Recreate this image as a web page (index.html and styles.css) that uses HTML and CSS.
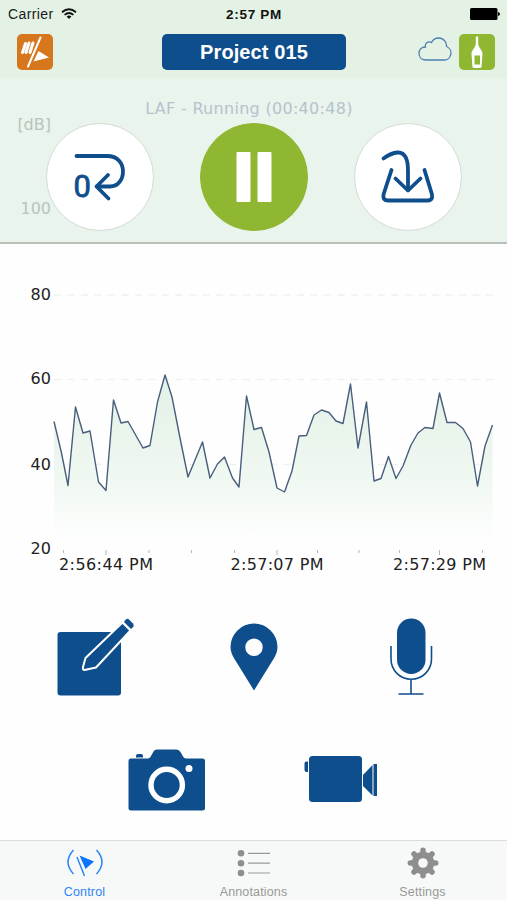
FILE: index.html
```html
<!DOCTYPE html>
<html lang="en">
<head>
    <meta charset="UTF-8">
    <meta name="viewport" content="width=device-width, initial-scale=1.0">
    <title>Project 015</title>
    <link rel="stylesheet" href="styles.css">
</head>
<body>
    <header class="top-bar">
        <div class="status-bar">
            <div class="carrier">
                <span>Carrier</span>
                <svg width="16" height="12" viewBox="0 0 16 12" fill="none" stroke="#111" stroke-width="1.8">
                    <path d="M1 4.3Q8-1.8 15 4.3"/>
                    <path d="M3.6 6.9Q8 3 12.4 6.9"/>
                    <path d="M5.6 8.5Q8 6.4 10.4 8.5L8 11Z" fill="#111" stroke="none"/>
                </svg>
            </div>
            <span class="time">2:57 PM</span>
            <svg class="battery" width="30" height="12" viewBox="0 0 30 12">
                <rect width="27.500" height="12" rx="1.500"/>
                <path d="M28 4Q30 4.500 30 6Q30 7.500 28 8Z"/>
            </svg>
        </div>
        <div class="nav-bar">
            <svg class="logo" width="36" height="36" viewBox="0 0 36 36">
                <rect width="36" height="36" rx="5" fill="#d6761d"/>
                <path d="M8.500 9.500L5.500 18.500M12 9L9 18.500M16 9L13 18.500" stroke="#fff" stroke-width="3" stroke-linecap="round"/>
                <path d="M23.500 3.500L11 32.500" stroke="#fff" stroke-width="2" stroke-linecap="round"/>
                <path d="M21.500 17L32 23.500L16.500 27.500Z" fill="#fff"/>
            </svg>
            <button class="project">Project 015</button>
            <div class="nav-right">
                <svg width="34" height="24" viewBox="0 0 34 24" fill="none" stroke="#4e7fae" stroke-width="1.300">
                    <path d="M8 23H25.500A7 7 0 0 0 28.500 9.500C29 4 24.500 1 20.500 1C17.500 1 15 2.500 13.500 5.500C10 3.500 6.500 6.500 7.500 10C3 10 1 13 1 16.500C1 20.500 4 23 8 23Z"/>
                </svg>
                <svg width="36" height="36" viewBox="0 0 36 36">
                    <rect width="36" height="36" rx="5" fill="#8fb732"/>
                    <path d="M16.800 2.500H19.200V10C19.700 14 23.500 16 23.500 20L22.500 33.500Q18 34.500 13.500 33.500L12.500 20C12.500 16 16.300 14 16.800 10Z" fill="#fff"/>
                    <path d="M15.500 21.500H21V30.500H15.500Z" fill="#8fb732"/>
                </svg>
            </div>
        </div>
    </header>

    <section class="panel">
        <div class="running">LAF - Running (00:40:48)</div>
        <span class="unit">[dB]</span>
        <span class="scale-top">100</span>
        <div class="controls">
            <button class="round">
                <svg width="106" height="106" viewBox="47 124 106 106" fill="none" stroke="#0f4e8c" stroke-width="3.800" stroke-linecap="round" stroke-linejoin="round">
                    <path d="M76.500 156H107C118 156 123 163.500 123 171.500C123 179.500 118 186.500 110 186.500H97"/>
                    <path d="M108 175L96.500 186.500L108.500 198.500"/>
                    <text class="zero" x="73.500" y="196.500">0</text>
                </svg>
            </button>
            <button class="round pause">
                <svg width="106" height="106" viewBox="201 124 106 106" fill="#fff">
                    <rect x="236.500" y="152" width="14" height="50" rx="1"/>
                    <rect x="257.500" y="152" width="14" height="50" rx="1"/>
                </svg>
            </button>
            <button class="round">
                <svg width="106" height="106" viewBox="355 124 106 106" fill="none" stroke="#0f4e8c" stroke-width="3.800" stroke-linecap="round" stroke-linejoin="round">
                    <path d="M391.500 170L383.500 194.500Q382.500 200.500 388 200.500H427.500Q433 200.500 432 194.500L424.500 170"/>
                    <path d="M383.500 158.500Q391 153 397.500 152.500C405.500 152 408 160 408 171V190"/>
                    <path d="M395.500 178.500L408 190.500L420.500 178.500"/>
                </svg>
            </button>
        </div>
    </section>

    <svg class="chart" width="507" height="336" viewBox="0 244 507 336">
        <defs>
            <linearGradient id="fade" gradientUnits="userSpaceOnUse" x1="0" y1="375" x2="0" y2="547">
                <stop offset="0" stop-color="#e3f1e6"/>
                <stop offset="0.550" stop-color="#eef7f0"/>
                <stop offset="1" stop-color="#fff"/>
            </linearGradient>
        </defs>
        <path class="grid" d="M54 295H493M54 379.500H493M54 464.500H493"/>
        <path id="area" fill="url(#fade)"/>
        <path id="line" class="line"/>
        <path class="ticks" d="M63.500 550V553M149 550V553M191.500 550V553M234.500 550V553M317.500 550V553M359 550V553M399.500 550V553M482.500 550V553M106 550V555M277 550V555M439.500 550V555"/>
        <g class="labels">
            <text x="30.500" y="300">80</text>
            <text x="30.500" y="384">60</text>
            <text x="30.500" y="470">40</text>
            <text x="30.500" y="554">20</text>
            <text x="59" y="569.500" textLength="94">2:56:44 PM</text>
            <text x="230.500" y="569.500" textLength="93">2:57:07 PM</text>
            <text x="393" y="569.500" textLength="93">2:57:29 PM</text>
        </g>
    </svg>

    <main class="actions">
        <div class="row first">
            <svg width="80" height="80" viewBox="56 617 80 80">
                <rect x="57.500" y="632" width="63.500" height="63.500" rx="3"/>
                <path d="M122.500 622.500L130.500 630.500L96 667.500L84.500 670Q82.500 670 83 667L85.500 658Z" stroke="#fff" stroke-width="2" stroke-linejoin="round"/>
                <path d="M125 620.500Q127 617.500 129.500 620L133 623.500Q134.500 625.500 132.500 627.500L131 629L124 622Z"/>
            </svg>
            <svg width="80" height="80" viewBox="214 617 80 80">
                <path fill-rule="evenodd" d="M254 690.500L234.500 659C232 655 230.500 651 230.500 647A23.500 23.500 0 0 1 277.500 647C277.500 651 276 655 273.500 659ZM254 638.500A8.700 8.700 0 1 0 254 656A8.700 8.700 0 1 0 254 638.500Z"/>
            </svg>
            <svg width="80" height="80" viewBox="371 617 80 80">
                <rect x="397" y="618.500" width="28.500" height="55.500" rx="14.200"/>
                <path d="M391 646V659A20.200 20.200 0 0 0 431.500 659V646M411 679V694M398.500 694H423.500" fill="none" stroke="#0f4e8c" stroke-width="1.600"/>
            </svg>
        </div>
        <div class="row second">
            <svg width="80" height="64" viewBox="127 748 80 64">
                <path d="M130.500 758.500H147.500Q150 758.500 151 756L153.500 751.500Q154.500 749.500 157 749.500H176.500Q179 749.500 180.500 752L183 756.500Q184 758.500 186 758.500H202.500Q205 758.500 205 761V808.500Q205 810.500 202.500 810.500H131Q128.500 810.500 128.500 808.500V761Q128.500 758.500 130.500 758.500Z"/>
                <path d="M136 757.500V755.500Q136 754 138 754H141Q143 754 143 755.500V757.500Z"/>
                <circle cx="166.700" cy="785" r="15.700" fill="none" stroke="#fff" stroke-width="5.400"/>
                <circle cx="189" cy="768.500" r="3.500" fill="#fff"/>
            </svg>
            <svg width="80" height="64" viewBox="301 748 80 64">
                <rect x="309" y="756" width="53" height="46" rx="3.500"/>
                <path d="M308 761.500H306.500Q304.500 761.500 304.500 763.500V770Q304.500 772 306.500 772H308Z"/>
                <path d="M363 775L372.500 765V795.500L363 786Z"/>
                <path d="M373.500 764H377V796H373.500Z"/>
            </svg>
        </div>
    </main>

    <nav class="tab-bar">
        <a class="tab active">
            <svg width="36" height="32" viewBox="67 847 36 32">
                <path d="M73.500 850Q62.500 862 73.500 874M96.500 850Q107.500 862 96.500 874M77 857L84.500 876" fill="none" stroke="#2d86f5" stroke-width="1.500"/>
                <path d="M79.500 855.500L94 861.500L85.500 869Z" fill="#0a74fa"/>
            </svg>
            <span>Control</span>
        </a>
        <a class="tab">
            <svg width="36" height="32" viewBox="236 847 36 32" fill="#8e8e8e">
                <circle cx="241" cy="853.300" r="3.300"/>
                <circle cx="241" cy="863.200" r="3.300"/>
                <circle cx="241" cy="873" r="3.300"/>
                <path d="M248 853.300H270M248 863.200H270M248 873H270" stroke="#999" stroke-width="1.200"/>
            </svg>
            <span>Annotations</span>
        </a>
        <a class="tab">
            <svg width="36" height="32" viewBox="-18 -16 36 32">
                <g stroke="#8e8e8e" stroke-width="5.500" stroke-linecap="round">
                    <path d="M0-12.700V12.700M-12.700 0H12.700M-9-9L9 9M-9 9L9-9"/>
                </g>
                <circle r="11.300" fill="#8e8e8e"/>
                <circle r="4.800" fill="#f6f9f7"/>
            </svg>
            <span>Settings</span>
        </a>
    </nav>

    <script>
        // [x, y] of every measurement on the chart canvas
        const points = [
            [54, 421.5], [61.5, 453], [68, 485.5], [75.5, 407], [83, 433], [90, 431],
            [98.5, 482], [106, 490.5], [113.5, 400], [121, 423], [128, 421.5], [143, 448],
            [150, 445.5], [157.5, 402], [165, 375], [172, 397], [180, 438], [188, 477],
            [202.5, 442], [210, 478], [217.5, 464], [224.5, 457], [232.5, 478], [239, 487],
            [246.5, 396], [254, 429.5], [261.5, 427.5], [269, 452], [277, 488], [284.5, 492],
            [292, 471], [299, 436], [306.5, 435.5], [314, 415], [321.5, 410], [329, 412.5],
            [336, 421], [343, 423.5], [350.5, 384], [358, 448], [366.5, 402], [374, 481],
            [381, 478.5], [388.5, 456.5], [396, 478.5], [403, 466], [411, 445], [418, 433],
            [425, 427.5], [433, 428.5], [439.5, 393], [447, 422.5], [455.5, 422.5],
            [463, 428.5], [470.5, 442], [477.5, 486], [485, 446], [492.5, 425]
        ];
        const path = 'M' + points.map(p => p.join(' ')).join('L');
        document.getElementById('line').setAttribute('d', path);
        document.getElementById('area').setAttribute('d', path + 'V547H54Z');
    </script>
</body>
</html>
```

FILE: styles.css
```css
body {
    display: flex;
    flex-direction: column;
    width: 507px;
    height: 900px;
    margin: 0;
    overflow: hidden;
    background-color: #fefefe;
    font-family: "Liberation Sans", Arial, sans-serif;
}
svg {
    display: block;
    flex: none;
}
button {
    padding: 0;
    border: none;
    font-family: inherit;
}
.top-bar {
    height: 78px;
    background-color: #e3f2e5;
}
.status-bar {
    display: grid;
    grid-template-columns: 1fr auto 1fr;
    align-items: center;
    height: 28px;
    padding: 0 7px 0 8px;
    font-size: 14px;
    color: #1a1a1a;
}
.carrier {
    display: flex;
    align-items: center;
    gap: 7px;
    letter-spacing: 0.4px;
}
.time {
    font-weight: bold;
    font-size: 13.5px;
    color: #111;
    letter-spacing: 0.7px;
}
.battery {
    justify-self: end;
}
.nav-bar {
    display: grid;
    grid-template-columns: 1fr 184px 1fr;
    align-items: center;
    height: 36px;
    margin-top: 6px;
    padding: 0 12px 0 17px;
}
.project {
    height: 36px;
    margin-left: -2px;
    margin-right: 2px;
    padding-top: 1px;
    border-radius: 5px;
    background-color: #0f4e8c;
    color: #fff;
    font-size: 20px;
    font-weight: bold;
    letter-spacing: 0.1px;
}
.nav-right {
    display: flex;
    justify-content: flex-end;
    align-items: center;
    gap: 7px;
}
.nav-right svg:first-child {
    margin-bottom: 7px;
}
.panel {
    position: relative;
    height: 164px;
    border-bottom: 2px solid #b9c0bb;
    background-color: #e8f4ec;
    font-family: "DejaVu Sans", Verdana, sans-serif;
    font-size: 16px;
    color: #b9c3be;
}
.running {
    height: 45px;
    line-height: 61px;
    text-align: center;
    margin-right: 9px;
    color: #b6c2ce;
    letter-spacing: 0.3px;
}
.unit, .scale-top {
    position: absolute;
    right: 456px;
}
.unit {
    top: 37px;
}
.scale-top {
    top: 121px;
}
.controls {
    position: relative;
    display: flex;
    justify-content: center;
    gap: 46px;
}
.round {
    width: 108px;
    height: 108px;
    border: 1px solid #d5dad6;
    border-radius: 50%;
    background-color: #fff;
}
.pause {
    border-color: #8fb732;
    background-color: #8fb732;
}
.zero {
    font-family: Roboto, sans-serif;
    font-size: 31px;
    fill: #0f4e8c;
    stroke-width: 0.8;
}
.grid {
    stroke: #eff1f0;
    stroke-width: 1.5;
    stroke-dasharray: 7 6.5;
}
.line {
    fill: none;
    stroke: #485e7d;
    stroke-width: 1.4;
    stroke-linejoin: round;
}
.ticks {
    stroke: #b5b9b7;
}
.labels {
    font-family: "DejaVu Sans", Verdana, sans-serif;
    font-size: 16px;
    fill: #222;
}
.actions {
    display: flex;
    flex-direction: column;
    flex: 1;
    gap: 51px;
    padding-top: 37px;
    fill: #0f4e8c;
}
.row {
    display: flex;
}
.first {
    justify-content: space-between;
    padding: 0 56px;
}
.second {
    justify-content: center;
    gap: 94px;
    margin-left: 1px;
}
.tab-bar {
    display: grid;
    grid-template-columns: repeat(3, 1fr);
    height: 59px;
    border-top: 1px solid #dcdedd;
    background-color: #f6f9f7;
}
.tab {
    display: flex;
    flex-direction: column;
    align-items: center;
    padding-top: 6px;
    font-size: 12.5px;
    line-height: 14px;
    letter-spacing: 0.15px;
    color: #999;
}
.tab span {
    margin-top: 6px;
}
.active {
    color: #2d86f5;
}
```
